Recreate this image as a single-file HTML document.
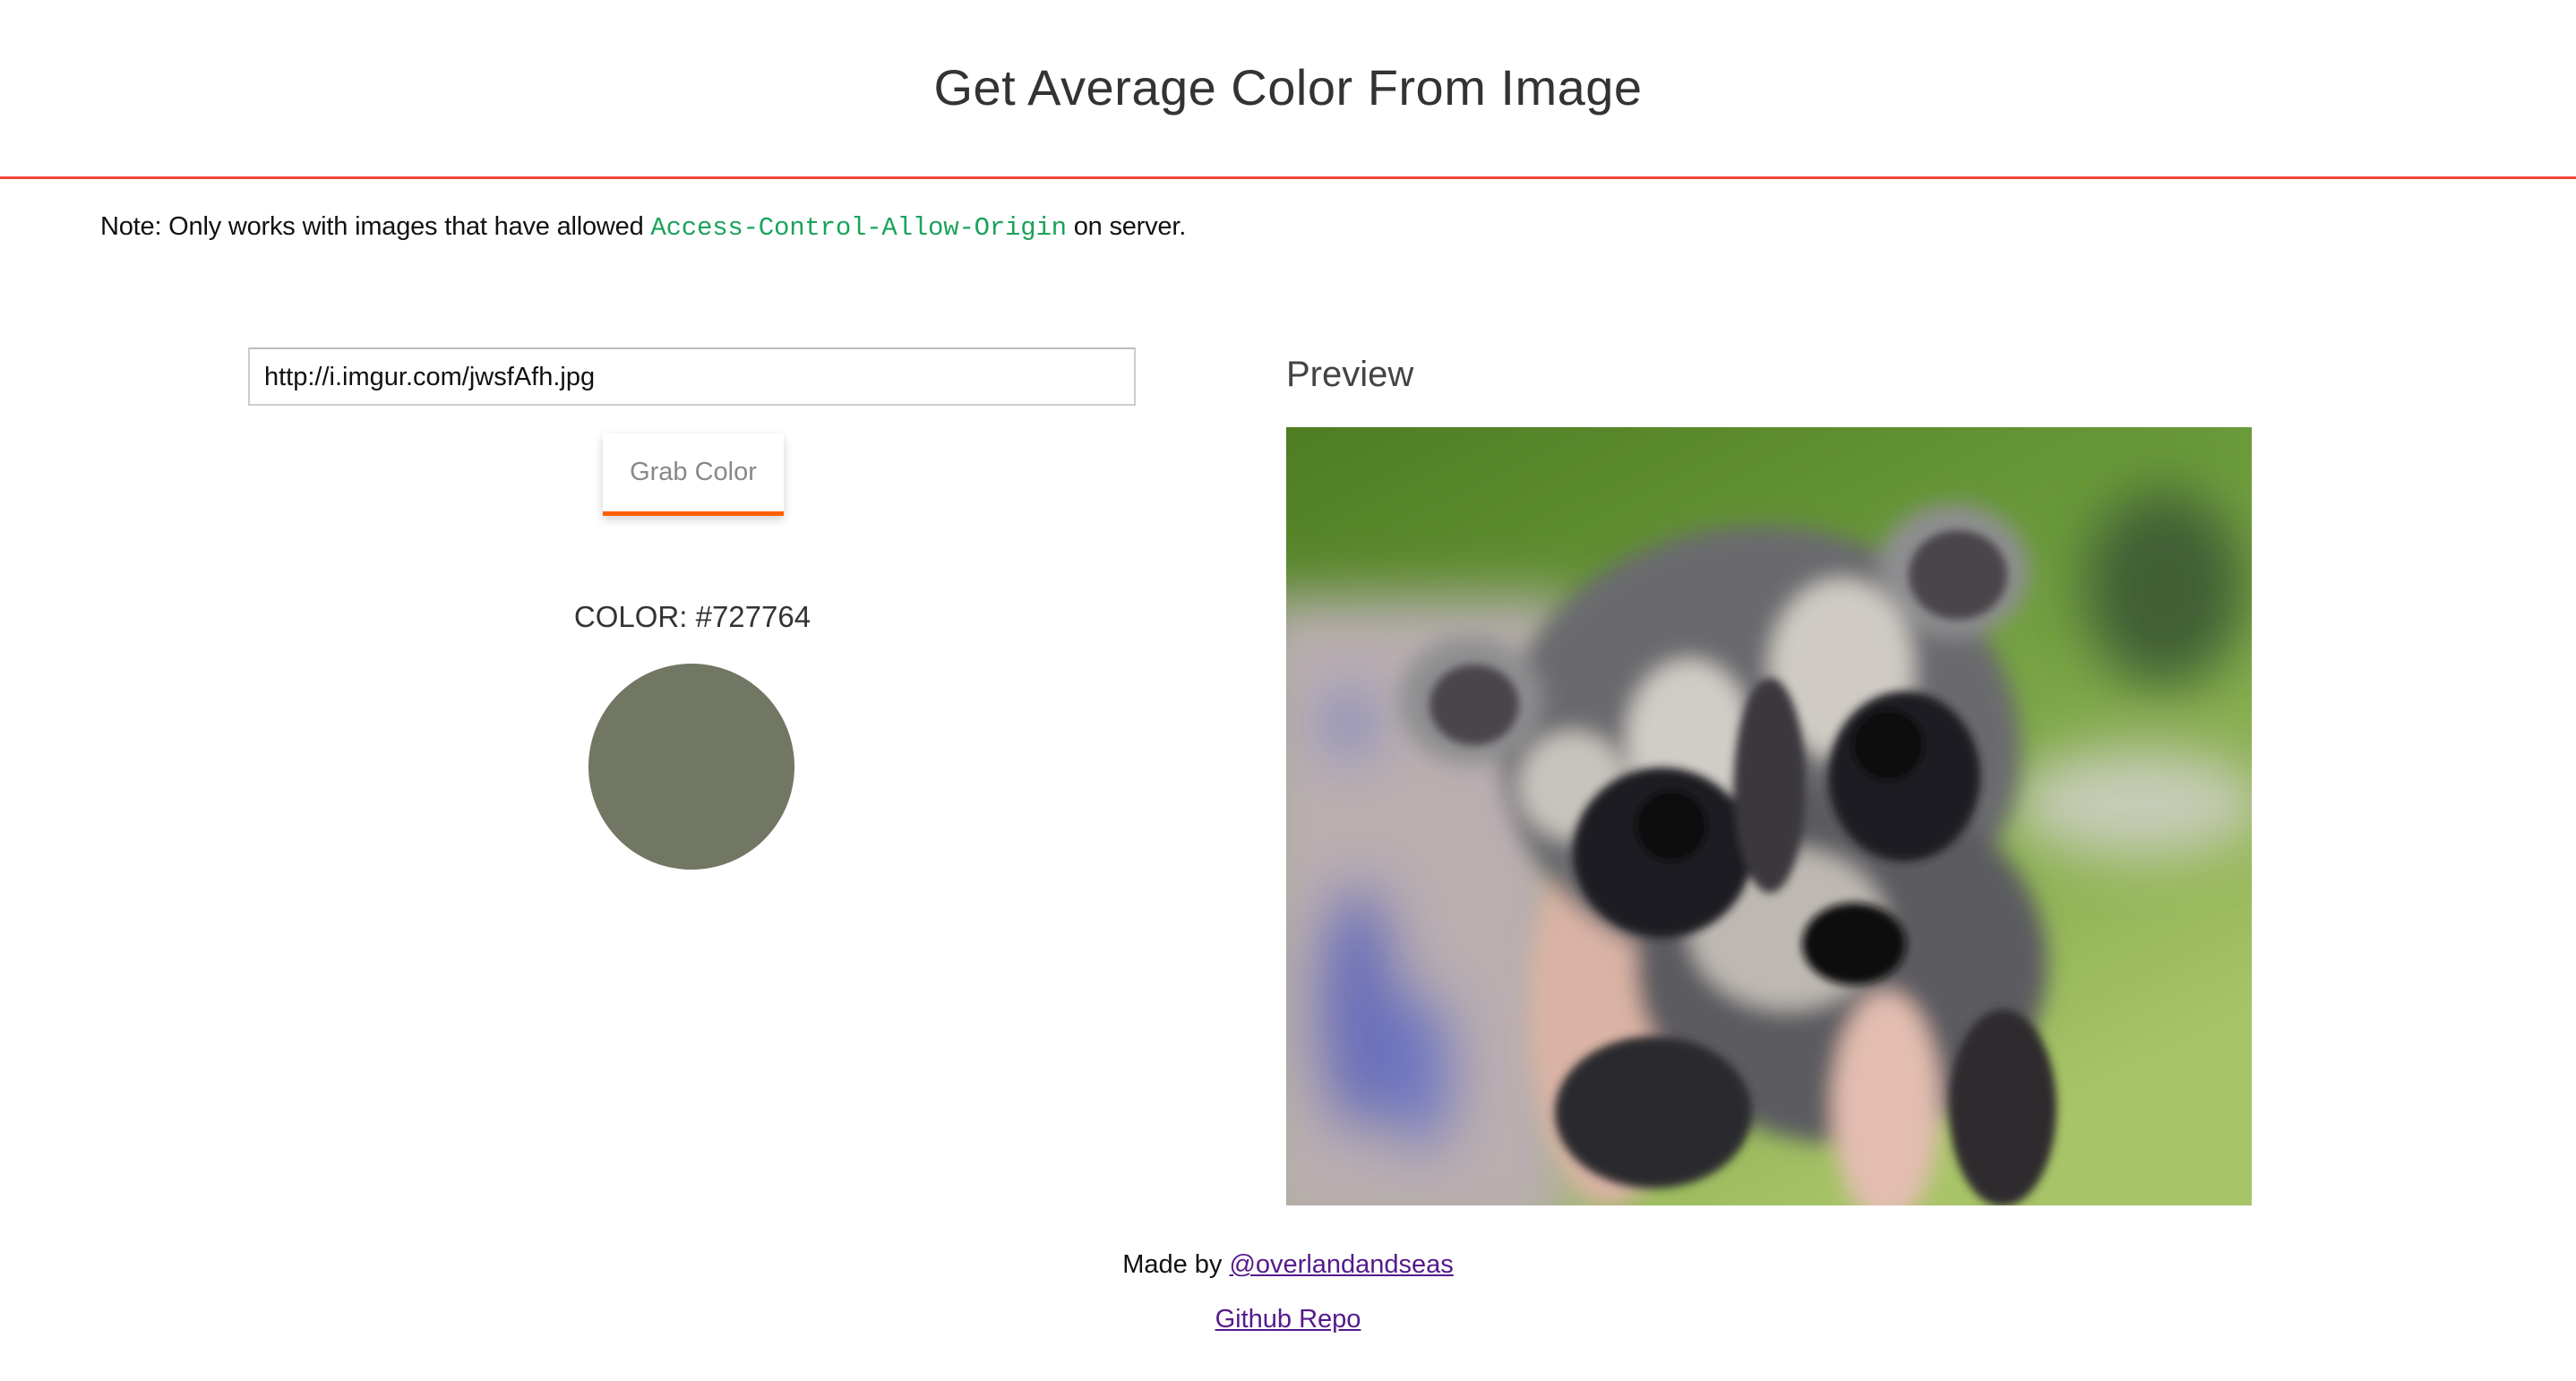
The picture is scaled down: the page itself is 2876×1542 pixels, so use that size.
<!DOCTYPE html>
<html><head><meta charset="utf-8"><style>
html,body{margin:0;padding:0;background:#fff;width:2876px;height:1542px;overflow:hidden;font-family:"Liberation Sans",sans-serif;}
.abs{position:absolute;}
h1{position:absolute;left:0;width:2876px;top:58px;margin:0;text-align:center;font-weight:300;font-size:56px;color:#333;line-height:80px;letter-spacing:0.5px;}
.line{left:0;top:197px;width:2876px;height:3px;background:#f4473a;}
.note{left:112px;top:232px;font-size:29px;color:#111;line-height:42px;white-space:nowrap;letter-spacing:-0.2px;}
.note code{font-family:"Liberation Mono",monospace;color:#1aa35a;font-size:29px;font-weight:normal;}
.inp{left:277px;top:388px;width:991px;height:65px;border:2px solid #ccc;border-top-color:#bbb;box-sizing:border-box;font-size:29px;line-height:63px;padding-left:16px;color:#111;}
.btn{left:673px;top:484px;width:202px;height:92px;box-sizing:border-box;background:#fff;border-bottom:5px solid #ff6000;box-shadow:0 4px 10px rgba(0,0,0,.18);text-align:center;line-height:86px;font-size:29px;color:#888;}
.col{left:540px;width:466px;top:664px;text-align:center;font-size:33px;color:#333;line-height:50px;}
.circ{left:657px;top:741px;width:230px;height:230px;border-radius:50%;background:#727764;}
.prev{left:1436px;top:390px;font-size:40px;color:#444;line-height:56px;}
.img{left:1436px;top:477px;width:1078px;height:869px;overflow:hidden;}
.foot{left:0;width:2876px;text-align:center;font-size:29px;color:#111;line-height:40px;}
.foot a{color:#551a8b;text-decoration:underline;}
</style></head><body>
<h1>Get Average Color From Image</h1>
<div class="abs line"></div>
<div class="abs note">Note: Only works with images that have allowed <code>Access-Control-Allow-Origin</code> on server.</div>
<div class="abs inp">http://i.imgur.com/jwsfAfh.jpg</div>
<div class="abs btn">Grab Color</div>
<div class="abs col">COLOR: #727764</div>
<div class="abs circ"></div>
<div class="abs prev">Preview</div>
<div class="abs img">
<svg width="1078" height="869" viewBox="0 0 1078 869">
<defs>
<linearGradient id="bg" x1="0" y1="0" x2="0.6" y2="1">
<stop offset="0" stop-color="#4f7d22"/><stop offset="0.45" stop-color="#6a9a3a"/><stop offset="1" stop-color="#a8c468"/></linearGradient>
<filter id="b1"><feGaussianBlur stdDeviation="30"/></filter>
<filter id="b2"><feGaussianBlur stdDeviation="12"/></filter>
<filter id="b3"><feGaussianBlur stdDeviation="5"/></filter>
</defs>
<rect width="1078" height="869" fill="url(#bg)"/>
<g filter="url(#b1)">
<ellipse cx="980" cy="180" rx="90" ry="110" fill="#3f5f35"/>
<ellipse cx="950" cy="420" rx="140" ry="60" fill="#c8ccb8"/>
<rect x="-40" y="190" width="360" height="720" fill="#b9aeb0"/>
<ellipse cx="80" cy="650" rx="50" ry="140" fill="#6a70b8"/>
<ellipse cx="150" cy="720" rx="40" ry="90" fill="#7078c0"/>
<ellipse cx="70" cy="330" rx="30" ry="40" fill="#8088c0"/>
</g>
<g filter="url(#b2)">
<ellipse cx="360" cy="650" rx="90" ry="220" fill="#d9b3a5"/>
<ellipse cx="530" cy="360" rx="290" ry="250" fill="#6b6a6e"/>
<ellipse cx="620" cy="600" rx="230" ry="200" fill="#5c5b60"/>
<ellipse cx="206" cy="305" rx="80" ry="72" fill="#8e8e90"/>
<ellipse cx="745" cy="160" rx="85" ry="75" fill="#8e8e90"/>
<ellipse cx="450" cy="350" rx="70" ry="90" fill="#d0ccc6"/>
<ellipse cx="620" cy="270" rx="80" ry="100" fill="#cfcbc4"/>
<ellipse cx="320" cy="400" rx="60" ry="60" fill="#c7c3bd"/>
<ellipse cx="560" cy="560" rx="110" ry="90" fill="#bdb8b2"/>
<ellipse cx="670" cy="760" rx="60" ry="130" fill="#e2bdb0"/>
</g>
<g filter="url(#b3)">
<ellipse cx="210" cy="310" rx="50" ry="45" fill="#4a4548"/>
<ellipse cx="750" cy="165" rx="55" ry="50" fill="#4a4548"/>
<ellipse cx="420" cy="475" rx="100" ry="95" fill="#1f1d22"/>
<ellipse cx="690" cy="390" rx="85" ry="95" fill="#1f1d22"/>
<ellipse cx="540" cy="400" rx="40" ry="120" fill="#3a383d"/>
<ellipse cx="430" cy="445" rx="40" ry="40" fill="#0c0c10"/>
<ellipse cx="672" cy="355" rx="40" ry="40" fill="#0c0c10"/>
<ellipse cx="634" cy="577" rx="58" ry="46" fill="#0d0c10"/>
<ellipse cx="410" cy="765" rx="110" ry="85" fill="#2c2a2d"/>
<ellipse cx="800" cy="760" rx="60" ry="110" fill="#2e2c2f"/>
</g>
</svg>
</div>
<div class="abs foot" style="top:1392px">Made by <a>@overlandandseas</a></div>
<div class="abs foot" style="top:1453px"><a>Github Repo</a></div>
</body></html>
